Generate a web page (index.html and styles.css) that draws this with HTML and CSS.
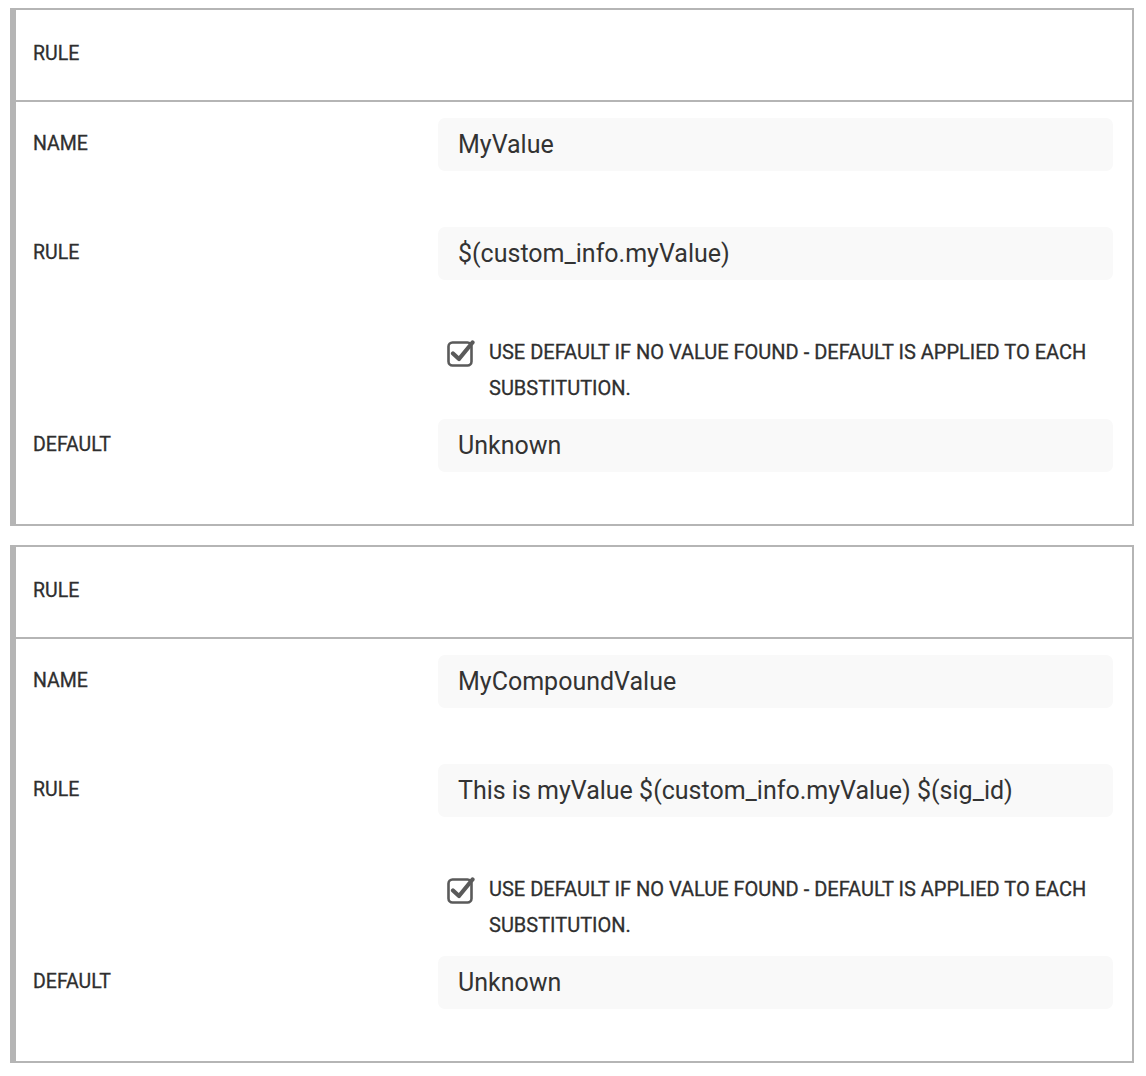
FILE: index.html
```html
<!DOCTYPE html>
<html>
<head>
<meta charset="utf-8">
<link rel="stylesheet" href="styles.css">
</head>
<body>
<div class="page">
  <section class="card">
    <div class="card-head"><span class="label">RULE</span></div>
    <div class="card-body">
      <div class="row">
        <div class="label">NAME</div>
        <div class="field">MyValue</div>
      </div>
      <div class="row row-rule">
        <div class="label">RULE</div>
        <div class="field">$(custom_info.myValue)</div>
      </div>
      <div class="check-row">
        <svg class="checkbox" viewBox="0 0 28 29" width="28" height="29">
          <rect x="1.5" y="4.5" width="23" height="23" rx="4" fill="none" stroke="#5a5a5a" stroke-width="2.6"/>
          <path d="M6 15.5 L12 21 L25.5 4.5" fill="none" stroke="#5a5a5a" stroke-width="4.2" stroke-linecap="round" stroke-linejoin="round"/>
        </svg>
        <div class="check-text">USE DEFAULT IF NO VALUE FOUND - DEFAULT IS APPLIED TO EACH SUBSTITUTION.</div>
      </div>
      <div class="row row-default">
        <div class="label">DEFAULT</div>
        <div class="field">Unknown</div>
      </div>
    </div>
  </section>
  <section class="card">
    <div class="card-head"><span class="label">RULE</span></div>
    <div class="card-body">
      <div class="row">
        <div class="label">NAME</div>
        <div class="field">MyCompoundValue</div>
      </div>
      <div class="row row-rule">
        <div class="label">RULE</div>
        <div class="field">This is myValue $(custom_info.myValue) $(sig_id)</div>
      </div>
      <div class="check-row">
        <svg class="checkbox" viewBox="0 0 28 29" width="28" height="29">
          <rect x="1.5" y="4.5" width="23" height="23" rx="4" fill="none" stroke="#5a5a5a" stroke-width="2.6"/>
          <path d="M6 15.5 L12 21 L25.5 4.5" fill="none" stroke="#5a5a5a" stroke-width="4.2" stroke-linecap="round" stroke-linejoin="round"/>
        </svg>
        <div class="check-text">USE DEFAULT IF NO VALUE FOUND - DEFAULT IS APPLIED TO EACH SUBSTITUTION.</div>
      </div>
      <div class="row row-default">
        <div class="label">DEFAULT</div>
        <div class="field">Unknown</div>
      </div>
    </div>
  </section>
</div>
</body>
</html>
```

FILE: styles.css
```css
* { box-sizing: border-box; }
html, body { margin: 0; padding: 0; background: #fff; }
body {
  font-family: Roboto, "Liberation Sans", sans-serif;
  color: #333;
}
.page {
  padding: 8px 12px 0 10px;
  display: flex;
  flex-direction: column;
  gap: 19px;
}
.card {
  border: 2px solid #b5b5b5;
  border-left-width: 6px;
  background: #fff;
}
.card-head {
  height: 92px;
  border-bottom: 2px solid #b5b5b5;
  display: flex;
  align-items: center;
  padding: 0 0 4px 17px;
}
.label {
  font-size: 19.5px;
  font-weight: 400;
  color: #2f2f2f;
  -webkit-text-stroke: 0.3px #2f2f2f;
}
.card-body {
  padding: 16px 19px 52px 17px;
  display: flex;
  flex-direction: column;
}
.row {
  display: grid;
  grid-template-columns: 405px 1fr;
  align-items: center;
}
.row .label { padding-bottom: 3px; }
.row-rule { margin-top: 56px; }
.row-default { margin-top: 13px; }
.field {
  height: 53px;
  background: #f9f9f9;
  border-radius: 7px;
  padding: 0 20px;
  display: flex;
  align-items: center;
  font-size: 25px;
  color: #333;
}
.check-row {
  margin-top: 54px;
  padding-left: 414px;
  display: flex;
  align-items: flex-start;
  gap: 14px;
}
.checkbox { flex: none; margin-top: 4px; }
.check-text {
  font-size: 20px;
  font-weight: 400;
  line-height: 36px;
  color: #2f2f2f;
  -webkit-text-stroke: 0.3px #2f2f2f;
  letter-spacing: 0;
  max-width: 620px;
}
```
